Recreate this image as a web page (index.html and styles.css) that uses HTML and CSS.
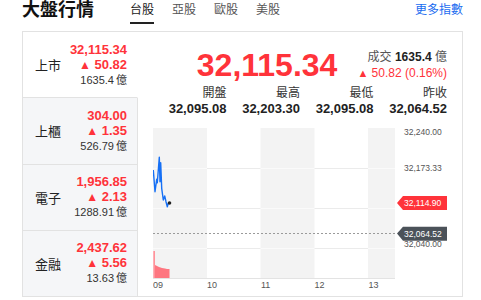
FILE: index.html
```html
<!DOCTYPE html>
<html lang="zh-Hant">
<head>
<meta charset="utf-8">
<title>大盤行情</title>
<link rel="stylesheet" href="styles.css">
</head>
<body>
<div class="page">
  <header class="top">
    <h1 class="title">大盤行情</h1>
    <nav class="tabs">
      <a class="tab active" href="#">台股</a>
      <a class="tab" href="#">亞股</a>
      <a class="tab" href="#">歐股</a>
      <a class="tab" href="#">美股</a>
    </nav>
    <a class="more" href="#">更多指數</a>
  </header>

  <div class="card">
    <ul class="markets">
      <li class="market active">
        <span class="name">上市</span>
        <div class="vals">
          <div class="price">32,115.34</div>
          <div class="chg"><span class="up">▲</span> 50.82</div>
          <div class="vol">1635.4<span class="unit">億</span></div>
        </div>
      </li>
      <li class="market">
        <span class="name">上櫃</span>
        <div class="vals">
          <div class="price">304.00</div>
          <div class="chg"><span class="up">▲</span> 1.35</div>
          <div class="vol">526.79<span class="unit">億</span></div>
        </div>
      </li>
      <li class="market">
        <span class="name">電子</span>
        <div class="vals">
          <div class="price">1,956.85</div>
          <div class="chg"><span class="up">▲</span> 2.13</div>
          <div class="vol">1288.91<span class="unit">億</span></div>
        </div>
      </li>
      <li class="market">
        <span class="name">金融</span>
        <div class="vals">
          <div class="price">2,437.62</div>
          <div class="chg"><span class="up">▲</span> 5.56</div>
          <div class="vol">13.63<span class="unit">億</span></div>
        </div>
      </li>
    </ul>

    <section class="detail">
      <div class="quote">
        <div class="big">32,115.34</div>
        <div class="info">
          <div><span class="lbl">成交</span> <b>1635.4</b> <span class="lbl">億</span></div>
          <div class="pct"><span class="up">▲</span> 50.82 (0.16%)</div>
        </div>
      </div>
      <div class="stats">
        <div class="stat"><div class="stat-label">開盤</div><div class="stat-val">32,095.08</div></div>
        <div class="stat"><div class="stat-label">最高</div><div class="stat-val">32,203.30</div></div>
        <div class="stat"><div class="stat-label">最低</div><div class="stat-val">32,095.08</div></div>
        <div class="stat"><div class="stat-label">昨收</div><div class="stat-val">32,064.52</div></div>
      </div>
      <svg class="chart" width="294" height="173" viewBox="0 0 294 173">
        <rect x="0" y="6" width="242" height="150" fill="#ffffff"/>
        <rect x="0" y="6" width="54" height="150" fill="#f3f3f3"/>
        <rect x="107.5" y="6" width="54" height="150" fill="#f3f3f3"/>
        <rect x="215" y="6" width="27" height="150" fill="#f3f3f3"/>
        <g stroke="#ebebeb" stroke-width="1">
          <line x1="0" y1="46.5" x2="242" y2="46.5"/>
          <line x1="0" y1="86.5" x2="242" y2="86.5"/>
          <line x1="0" y1="126.5" x2="242" y2="126.5"/>
        </g>
        <g stroke="#fafafa" stroke-width="1">
          <line x1="0" y1="46.5" x2="54" y2="46.5"/>
          <line x1="107.5" y1="46.5" x2="161.5" y2="46.5"/>
          <line x1="215" y1="46.5" x2="242" y2="46.5"/>
          <line x1="0" y1="86.5" x2="54" y2="86.5"/>
          <line x1="107.5" y1="86.5" x2="161.5" y2="86.5"/>
          <line x1="215" y1="86.5" x2="242" y2="86.5"/>
          <line x1="0" y1="126.5" x2="54" y2="126.5"/>
          <line x1="107.5" y1="126.5" x2="161.5" y2="126.5"/>
          <line x1="215" y1="126.5" x2="242" y2="126.5"/>
        </g>
        <line x1="0" y1="156.5" x2="242" y2="156.5" stroke="#e3e3e3"/>
        <polygon points="0,156 0,129 2,129 2,143 4,144 6,145 9,146 12,146.5 14,147 16.5,147 16.5,156" fill="#ff5f6b" opacity="0.85"/>
        <polygon points="0,156 0,129 1.5,129 1.5,156" fill="#ffb0b6"/>
        <line x1="0" y1="111.5" x2="244" y2="111.5" stroke="#9a9a9a" stroke-dasharray="2,2"/>
        <polyline fill="none" stroke="#1670f5" stroke-width="1.4" stroke-linejoin="round"
          points="0.3,48 2,69.7 3.7,57.3 4.3,60.7 6.3,35.3 7,59.7 7.7,40.7 8.7,66.3 10.3,78 11.7,74 13,79.7 14.3,84.7 15.3,81.3 16.3,80.7"/>
        <circle cx="16.5" cy="81" r="1.8" fill="#222"/>
        <g class="axis" font-size="8.5" fill="#555">
          <text x="251" y="12.7">32,240.00</text>
          <text x="251" y="48.7">32,173.33</text>
          <text x="251" y="125">32,040.00</text>
        </g>
        <g class="xaxis" font-size="9" fill="#555">
          <text x="0" y="166">09</text>
          <text x="54" y="166">10</text>
          <text x="108" y="166">11</text>
          <text x="161.5" y="166">12</text>
          <text x="215.5" y="166">13</text>
        </g>
        <polygon points="244,81 250,74 294,74 294,88 250,88" fill="#ff333a"/>
        <text x="251" y="84" font-size="8.5" fill="#fff">32,114.90</text>
        <polygon points="244,111.5 250,104.7 294,104.7 294,118.7 250,118.7" fill="#4b5259"/>
        <text x="251" y="114.7" font-size="8.5" fill="#fff">32,064.52</text>
      </svg>
    </section>
  </div>
</div>
</body>
</html>
```

FILE: styles.css
```css
* {
  box-sizing: border-box;
}

body {
  margin: 0;
  background: #ffffff;
  color: #222222;
  font-family: "Liberation Sans", "Noto Sans CJK TC", sans-serif;
}

.page {
  margin-left: 22px;
  width: 441px;
}

.top {
  display: flex;
  align-items: flex-start;
  height: 24px;
}

.title {
  margin: 0;
  font-size: 18px;
  line-height: 20px;
  font-weight: 700;
  color: #111111;
}

.tabs {
  display: flex;
  gap: 18px;
  margin-left: 36px;
}

.tab {
  font-size: 12px;
  line-height: 20px;
  padding-bottom: 2px;
  border-bottom: 2px solid transparent;
  color: #555555;
  text-decoration: none;
}

.tab.active {
  color: #1a1a1a;
  border-bottom-color: #222222;
}

.more {
  margin-left: auto;
  font-size: 12px;
  line-height: 20px;
  color: #1a6cf0;
  text-decoration: none;
}

.card {
  margin-top: 7px;
  display: flex;
  height: 266px;
  border: 1px solid #e2e2e2;
}

.markets {
  list-style: none;
  margin: 0;
  padding: 0;
  width: 115px;
  display: flex;
  flex-direction: column;
}

.market {
  flex: 1;
  display: flex;
  align-items: center;
  justify-content: space-between;
  padding: 0 10px 0 12px;
  background: #f5f6f8;
  border-right: 1px solid #e2e2e2;
  border-bottom: 1px solid #e2e2e2;
}

.market:last-child {
  border-bottom: 0;
}

.market.active {
  background: #ffffff;
  border-right-color: #ffffff;
}

.name {
  font-size: 13px;
  color: #222222;
}

.vals {
  text-align: right;
  line-height: 15px;
}

.price,
.chg {
  color: #ff333a;
  font-weight: 700;
  font-size: 13px;
}

.up {
  font-size: 12px;
  font-weight: 400;
}

.vol {
  font-size: 11px;
  color: #333333;
}

.unit {
  margin-left: 2px;
}

.detail {
  flex: 1;
  padding: 15px 15px 0 15px;
  display: flex;
  flex-direction: column;
}

.quote {
  display: flex;
  justify-content: flex-end;
  align-items: center;
  gap: 20px;
  height: 36px;
}

.big {
  font-size: 32px;
  line-height: 36px;
  font-weight: 700;
  color: #ff333a;
}

.info {
  text-align: right;
  font-size: 12px;
  line-height: 16.5px;
}

.info .lbl {
  color: #555555;
}

.info b {
  color: #222222;
}

.info .pct {
  color: #ff333a;
}

.info .up {
  font-size: 11px;
}

.stats {
  display: grid;
  grid-template-columns: repeat(4, 1fr);
  margin-top: 2px;
  text-align: right;
}

.stat-label {
  font-size: 12px;
  line-height: 16px;
  color: #333333;
}

.stat-val {
  font-size: 13px;
  line-height: 16px;
  font-weight: 700;
  color: #222222;
}

.chart {
  display: block;
  margin-top: 5px;
  font-family: "Liberation Sans", sans-serif;
}
```
